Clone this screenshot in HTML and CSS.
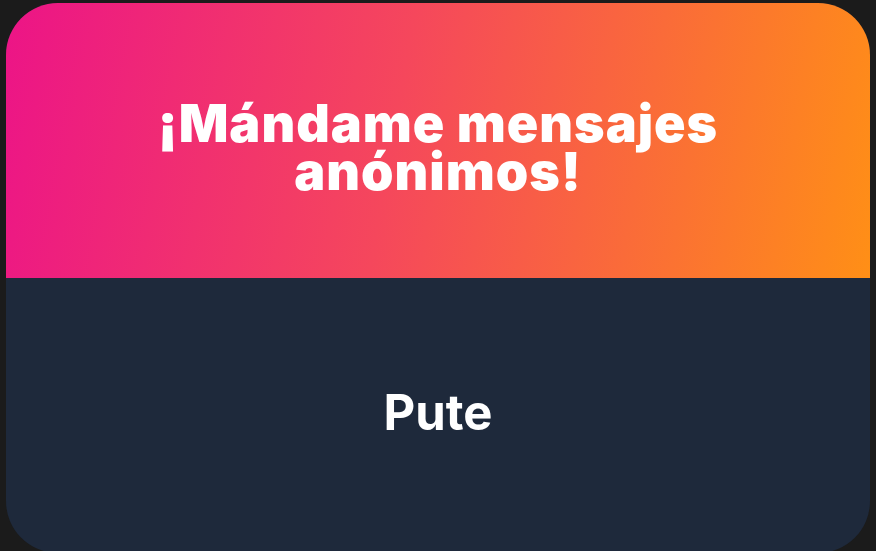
FILE: index.html
```html
<!DOCTYPE html>
<html lang="es">
<head>
    <meta charset="UTF-8">
    <meta name="viewport" content="width=device-width, initial-scale=1.0">
    <title>Mensajes anónimos</title>
    <link rel="stylesheet" href="styles.css">
</head>
<body>
    <div class="card">
        <div class="card-header">
            <h1>¡Mándame mensajes anónimos!</h1>
        </div>
        <div class="card-body">
            <p class="message">Pute</p>
        </div>
    </div>
</body>
</html>
```

FILE: styles.css
```css
/* Basic Styles */
html, body {
    height: 100%;
}
body {
    margin: 0;
    background-color: #1b1b1b;
    font-family: Inter, "Noto Sans", Arial, sans-serif;
    overflow: hidden;
}

/* Card */
.card {
    margin: 3px 6px 0 6px;
    height: 550px;
    border-radius: 52px;
    overflow: hidden;
    display: flex;
    flex-direction: column;
    background-color: #1e293b;
}

/* Gradient header */
.card-header {
    height: 275px;
    display: flex;
    align-items: center;
    justify-content: center;
    background: linear-gradient(100deg, #ec1487 0%, #f5475c 45%, #ff8f16 100%);
}
.card-header h1 {
    margin: 0;
    padding-top: 14px;
    width: 640px;
    color: #fff;
    text-align: center;
    font-size: 52px;
    font-weight: 900;
    line-height: 48px;
    letter-spacing: 1px;
}

/* Message */
.card-body {
    flex: 1;
    display: flex;
    align-items: center;
    justify-content: center;
}
.message {
    margin: 0 0 6px 0;
    color: #fff;
    font-size: 49px;
    font-weight: 700;
}
```
